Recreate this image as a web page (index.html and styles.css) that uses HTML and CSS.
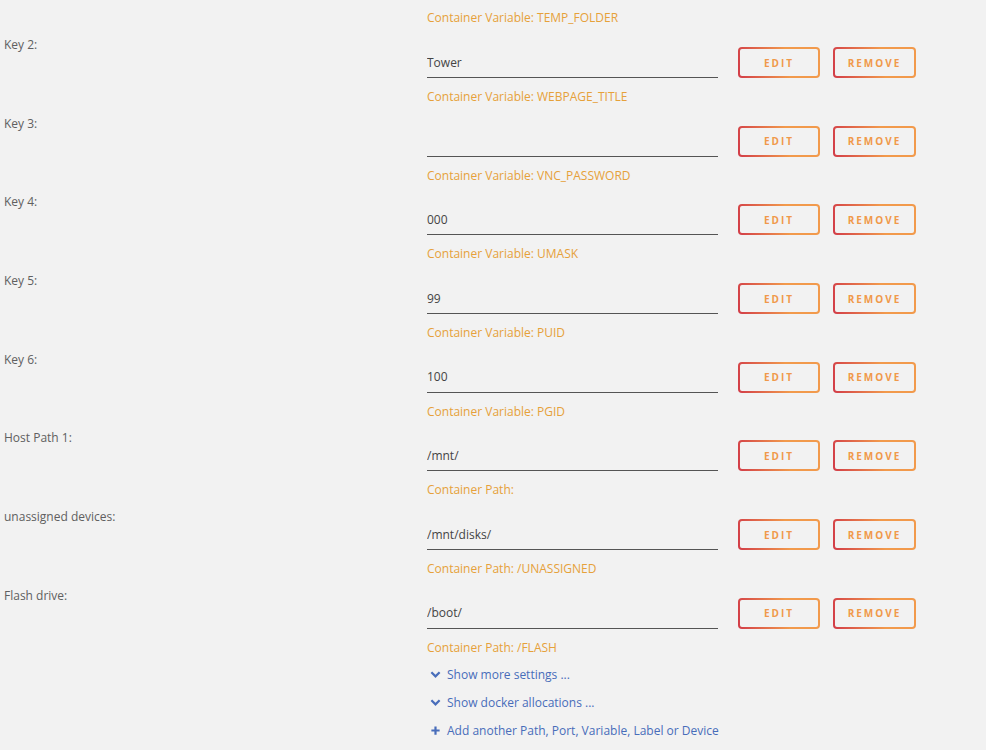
FILE: index.html
```html
<!DOCTYPE html>
<html lang="en">

<head>
    <meta charset="utf-8">
    <meta name="viewport" content="width=device-width, initial-scale=1.0">
    <title>Docker template</title>

    <link rel="stylesheet" href="styles.css">
</head>

<body>
    <main id="config">
        <div class="tail">
            <p class="hint">Container Variable: TEMP_FOLDER</p>
        </div>

        <div class="setting">
            <p class="label">Key 2:</p>
            <div class="felt">
                <div class="linje">
                    <input class="input" type="text" value="Tower">
                    <button class="knap edit">EDIT</button>
                    <button class="knap">REMOVE</button>
                </div>
                <p class="hint">Container Variable: WEBPAGE_TITLE</p>
            </div>
        </div>

        <div class="setting">
            <p class="label">Key 3:</p>
            <div class="felt">
                <div class="linje">
                    <input class="input" type="password" value="">
                    <button class="knap edit">EDIT</button>
                    <button class="knap">REMOVE</button>
                </div>
                <p class="hint">Container Variable: VNC_PASSWORD</p>
            </div>
        </div>

        <div class="setting">
            <p class="label">Key 4:</p>
            <div class="felt">
                <div class="linje">
                    <input class="input" type="text" value="000">
                    <button class="knap edit">EDIT</button>
                    <button class="knap">REMOVE</button>
                </div>
                <p class="hint">Container Variable: UMASK</p>
            </div>
        </div>

        <div class="setting">
            <p class="label">Key 5:</p>
            <div class="felt">
                <div class="linje">
                    <input class="input" type="text" value="99">
                    <button class="knap edit">EDIT</button>
                    <button class="knap">REMOVE</button>
                </div>
                <p class="hint">Container Variable: PUID</p>
            </div>
        </div>

        <div class="setting">
            <p class="label">Key 6:</p>
            <div class="felt">
                <div class="linje">
                    <input class="input" type="text" value="100">
                    <button class="knap edit">EDIT</button>
                    <button class="knap">REMOVE</button>
                </div>
                <p class="hint">Container Variable: PGID</p>
            </div>
        </div>

        <div class="setting">
            <p class="label">Host Path 1:</p>
            <div class="felt">
                <div class="linje">
                    <input class="input" type="text" value="/mnt/">
                    <button class="knap edit">EDIT</button>
                    <button class="knap">REMOVE</button>
                </div>
                <p class="hint">Container Path:</p>
            </div>
        </div>

        <div class="setting">
            <p class="label">unassigned devices:</p>
            <div class="felt">
                <div class="linje">
                    <input class="input" type="text" value="/mnt/disks/">
                    <button class="knap edit">EDIT</button>
                    <button class="knap">REMOVE</button>
                </div>
                <p class="hint">Container Path: /UNASSIGNED</p>
            </div>
        </div>

        <div class="setting">
            <p class="label">Flash drive:</p>
            <div class="felt">
                <div class="linje">
                    <input class="input" type="text" value="/boot/">
                    <button class="knap edit">EDIT</button>
                    <button class="knap">REMOVE</button>
                </div>
                <p class="hint">Container Path: /FLASH</p>
            </div>
        </div>

        <div class="links">
            <a class="link" href="#">
                <svg class="ikon" viewBox="0 0 12 12"><path d="M1.5 3.5 L6 8 L10.5 3.5" fill="none" stroke="currentColor" stroke-width="2.4"/></svg>
                Show more settings ...
            </a>
            <a class="link" href="#">
                <svg class="ikon" viewBox="0 0 12 12"><path d="M1.5 3.5 L6 8 L10.5 3.5" fill="none" stroke="currentColor" stroke-width="2.4"/></svg>
                Show docker allocations ...
            </a>
            <a class="link" href="#">
                <svg class="ikon" viewBox="0 0 12 12"><path d="M6 1.5 V10.5 M1.5 6 H10.5" fill="none" stroke="currentColor" stroke-width="2.4"/></svg>
                Add another Path, Port, Variable, Label or Device
            </a>
        </div>
    </main>
</body>

</html>
```

FILE: styles.css
```css
body {
    margin: 0;
    background-color: #f2f2f2;
    font-family: "Open Sans", "DejaVu Sans", sans-serif;
    font-size: 12px;
    color: #606060;
}

p {
    margin: 0;
}

.tail {
    padding: 8px 0 9px 427px;
}

.hint {
    color: #e6a13a;
    line-height: 20px;
}

.setting {
    display: grid;
    grid-template-columns: 427px 1fr;
    height: 78.7px;
}

.label {
    padding-left: 4px;
    line-height: 16px;
}

.felt {
    padding-top: 10px;
}

.felt .hint {
    margin-top: 9px;
}

.linje {
    display: flex;
    align-items: stretch;
    height: 31px;
}

.input {
    width: 291px;
    margin: 0 20px 0 0;
    padding: 0;
    border: none;
    border-bottom: 1px solid #555;
    background: transparent;
    font-family: inherit;
    font-size: 12px;
    color: #444;
    outline: none;
}

/* knapper med gradient kant */
.knap {
    width: 83px;
    padding: 0;
    border: 2px solid transparent;
    border-radius: 4px;
    background: linear-gradient(#f2f2f2, #f2f2f2) padding-box,
        linear-gradient(80deg, #d23c48, #f29a4c 60%) border-box;
    color: #f0994a;
    font-family: "Open Sans", sans-serif;
    font-size: 10px;
    font-weight: bold;
    letter-spacing: 2px;
    cursor: pointer;
}

.edit {
    width: 82px;
    margin-right: 13px;
}

.links {
    margin-top: -6px;
    padding-left: 430px;
}

.link {
    display: flex;
    align-items: center;
    gap: 6px;
    height: 28px;
    color: #486dba;
    text-decoration: none;
}

.ikon {
    width: 11px;
    height: 11px;
}
```
